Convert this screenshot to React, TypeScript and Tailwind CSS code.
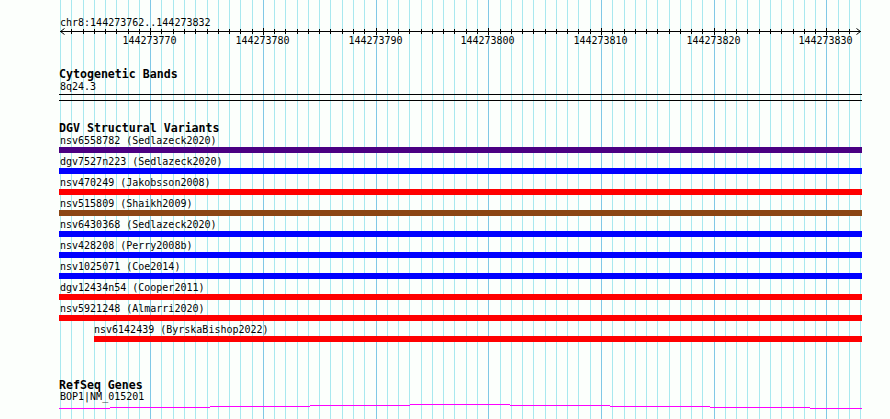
import React from "react";

const XS = Array.from({ length: 72 }, (_, i) => Math.round(60 + i * 11.27));
const isMajor = (i: number) => (762 + i) % 10 === 0;

const rows: { label: string; color: string; indent?: boolean }[] = [
  { label: "nsv6558782 (Sedlazeck2020)", color: "bg-[#4b0082]" },
  { label: "dgv7527n223 (Sedlazeck2020)", color: "bg-[#0000ff]" },
  { label: "nsv470249 (Jakobsson2008)", color: "bg-[#ff0000]" },
  { label: "nsv515809 (Shaikh2009)", color: "bg-[#8b4513]" },
  { label: "nsv6430368 (Sedlazeck2020)", color: "bg-[#0000ff]" },
  { label: "nsv428208 (Perry2008b)", color: "bg-[#0000ff]" },
  { label: "nsv1025071 (Coe2014)", color: "bg-[#0000ff]" },
  { label: "dgv12434n54 (Cooper2011)", color: "bg-[#ff0000]" },
  { label: "nsv5921248 (Almarri2020)", color: "bg-[#ff0000]" },
  { label: "nsv6142439 (ByrskaBishop2022)", color: "bg-[#ff0000]", indent: true },
];

const geneSegs: [number, number, number][] = [
  [59, 110, 408],
  [110, 210, 407],
  [210, 310, 406],
  [310, 410, 405],
  [410, 510, 404],
  [510, 610, 405],
  [610, 710, 406],
  [710, 810, 407],
  [810, 862, 408],
];

function Grid() {
  return (
    <svg className="absolute inset-0" width={890} height={419} shapeRendering="crispEdges">
      {XS.map((x, i) => (
        <rect key={i} x={x} y={0} width={1} height={419} fill={isMajor(i) ? "#80c8e6" : "#a8e8ef"} />
      ))}
    </svg>
  );
}

function Ruler() {
  const ox = 59;
  const oy = 29;
  return (
    <svg className="block overflow-visible" width={803} height={18}>
      <g shapeRendering="crispEdges" fill="#000">
        <rect x={60 - ox} y={31 - oy} width={801} height={1} />
        {XS.slice(1, 71).map((x, j) => {
          const i = j + 1;
          return isMajor(i) ? (
            <rect key={i} x={x - ox} y={28 - oy} width={1} height={7} />
          ) : (
            <rect key={i} x={x - ox} y={29 - oy} width={1} height={5} />
          );
        })}
      </g>
      <g stroke="#000" strokeWidth={1} fill="none">
        <path d={`M${60.5 - ox} ${31.5 - oy} L${64.5 - ox} ${28.5 - oy} M${60.5 - ox} ${31.5 - oy} L${64.5 - ox} ${34.5 - oy}`} />
        <path d={`M${860.5 - ox} ${31.5 - oy} L${856.5 - ox} ${28.5 - oy} M${860.5 - ox} ${31.5 - oy} L${856.5 - ox} ${34.5 - oy}`} />
      </g>
      {XS.map((x, i) =>
        isMajor(i) ? (
          <text
            key={i}
            x={x - ox - 0.5}
            y={44 - oy}
            textAnchor="middle"
            fontFamily="'DejaVu Sans Mono', monospace"
            fontSize={10}
            fill="#000"
          >
            {762 + i + 144273000}
          </text>
        ) : null
      )}
    </svg>
  );
}

function GeneLine() {
  const oy = 402;
  return (
    <svg className="block" width={803} height={8} shapeRendering="crispEdges">
      {geneSegs.map(([a, b, y], k) => (
        <rect key={k} x={a - 59} y={y - oy} width={b - a} height={1} fill="#ff00ff" />
      ))}
    </svg>
  );
}

export default function App() {
  const mono = "font-[family-name:'DejaVu_Sans_Mono',monospace]";
  return (
    <div className={`relative w-[890px] h-[419px] overflow-hidden bg-[#fcfffc] text-black ${mono}`}>
      <Grid />
      <div className="relative flex flex-col pl-[59px] w-[862px]">
        <div className="mt-[16px] pl-px text-[10px] leading-[13px] whitespace-pre">chr8:144273762..144273832</div>
        <Ruler />

        <div className="mt-[20px] text-[11.6px] leading-[14px] font-bold whitespace-pre">Cytogenetic Bands</div>
        <div className="pl-px text-[10px] leading-[11px] whitespace-pre">8q24.3</div>
        <div className="mt-[2px] h-px w-[803px] bg-black" />
        <div className="mt-[5px] h-px w-[803px] bg-black" />

        <div className="mt-[20px] text-[11.6px] leading-[14px] font-bold whitespace-pre">DGV Structural Variants</div>
        <div className="flex flex-col">
          {rows.map((r) => (
            <div key={r.label} className={`flex flex-col mb-[3px] ${r.indent ? "pl-[35px]" : ""}`}>
              <div className={`${r.indent ? "" : "pl-px"} h-[12px] text-[10px] leading-[12px] whitespace-pre`}>{r.label}</div>
              <div className={`h-[6px] ${r.indent ? "w-[768px]" : "w-[803px]"} ${r.color}`} />
            </div>
          ))}
        </div>

        <div className="mt-[33px] text-[11.6px] leading-[14px] font-bold whitespace-pre">RefSeq Genes</div>
        <div className="pl-px h-[10px] text-[10px] leading-[10px] whitespace-pre">BOP1|NM_015201</div>
        <GeneLine />
      </div>
    </div>
  );
}
